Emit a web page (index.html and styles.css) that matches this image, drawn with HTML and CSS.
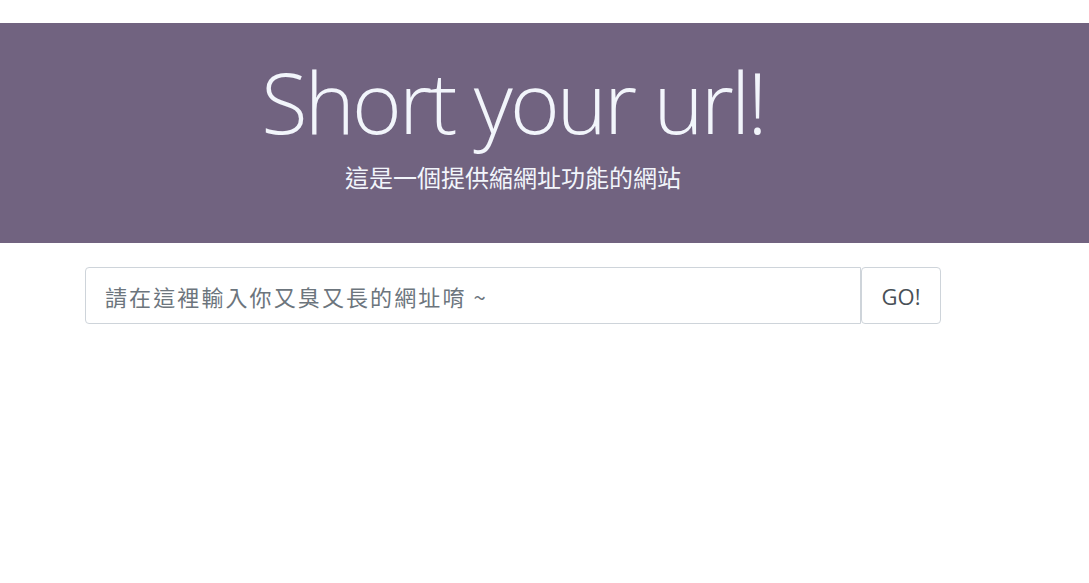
FILE: index.html
```html
<!DOCTYPE html>
<html lang="zh-Hant">
<head>
<meta charset="utf-8">
<title>Short your url!</title>
<link rel="stylesheet" href="styles.css">
</head>
<body>
<header class="hero">
  <div class="hero-inner">
    <h1 class="hero-title">Short your url!</h1>
    <p class="hero-lead">這是一個提供縮網址功能的網站</p>
  </div>
</header>
<main class="main">
  <form class="url-form">
    <input class="url-input" type="text" placeholder="請在這裡輸入你又臭又長的網址唷 ~">
    <button class="go-btn" type="button">GO!</button>
  </form>
</main>
</body>
</html>
```
FILE: styles.css
```css
html, body {
  margin: 0;
  padding: 0;
  background: #ffffff;
  font-family: "Open Sans", "Noto Sans CJK TC", sans-serif;
}
.hero {
  margin-top: 23px;
  height: 220px;
  background: #716380;
  color: #f2f5fb;
  box-sizing: border-box;
  padding-top: 36px;
}
.hero-inner {
  width: 856px;
  margin-left: 85px;
  text-align: center;
}
.hero-title {
  margin: 0;
  font-family: "Open Sans", sans-serif;
  font-weight: 300;
  font-size: 85px;
  line-height: 85px;
  letter-spacing: -2.9px;
}
.hero-lead {
  margin: 18px 0 0;
  font-family: "Noto Sans CJK TC", sans-serif;
  font-size: 24px;
  line-height: 30px;
  letter-spacing: 0;
  font-weight: 400;
}
.main {
  padding-top: 24px;
}
.url-form {
  display: flex;
  width: 856px;
  margin-left: 85px;
  height: 57px;
}
.url-input {
  flex: 1;
  min-width: 0;
  box-sizing: border-box;
  height: 57px;
  border: 1px solid #ced4da;
  border-radius: 4px 0 0 4px;
  padding: 0 19px;
  font-family: "Noto Sans CJK TC", sans-serif;
  font-size: 22px;
  letter-spacing: 2.1px;
  color: #495057;
  outline: none;
}
.url-input::placeholder {
  color: #6c757d;
}
.go-btn {
  width: 80px;
  box-sizing: border-box;
  height: 57px;
  border: 1px solid #ced4da;
  border-radius: 4px;
  background: #ffffff;
  color: #495057;
  font-family: "Open Sans", sans-serif;
  font-size: 22px;
  padding: 0;
}
```
